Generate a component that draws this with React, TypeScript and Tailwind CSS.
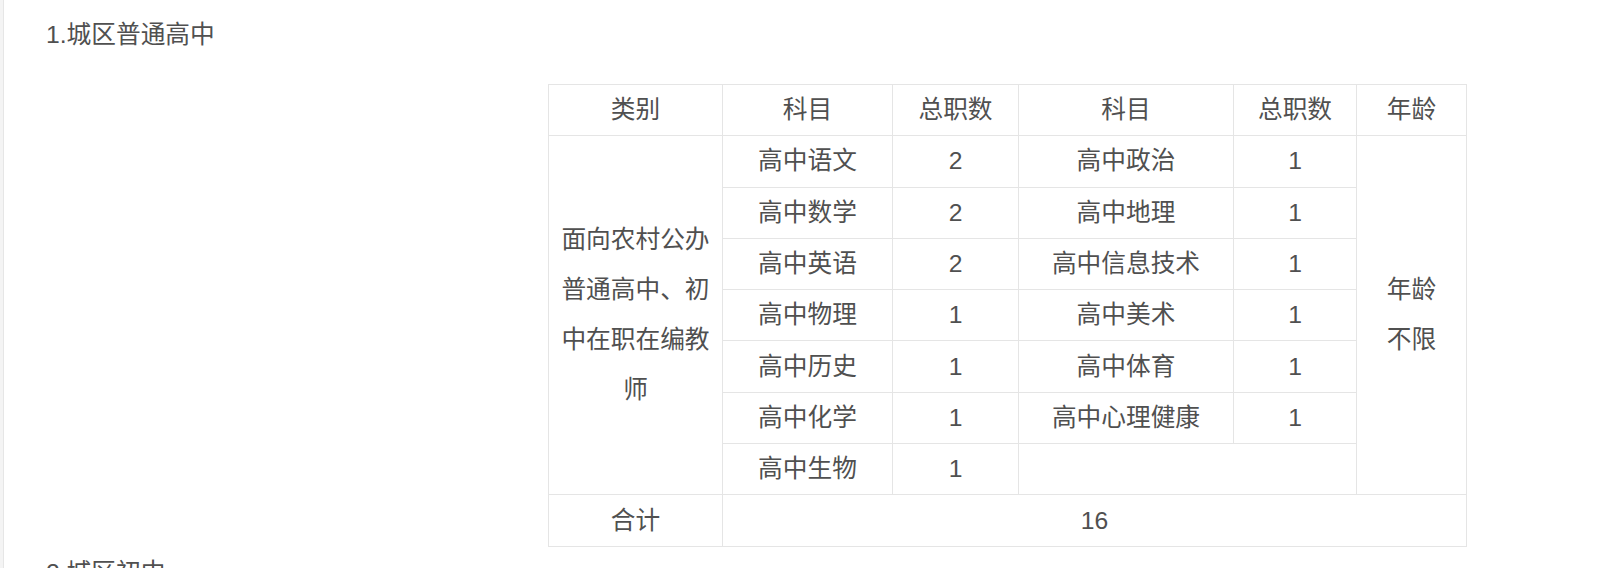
const left = [
  ['高中语文', '2', '高中政治', '1'],
  ['高中数学', '2', '高中地理', '1'],
  ['高中英语', '2', '高中信息技术', '1'],
  ['高中物理', '1', '高中美术', '1'],
  ['高中历史', '1', '高中体育', '1'],
  ['高中化学', '1', '高中心理健康', '1'],
]

const cell = 'border border-[#e5e5e5] p-0 text-center align-middle leading-[50px]'

export default function App() {
  return (
    <div
      className="flex min-h-screen bg-white text-[24.7px] text-[#505050]"
      style={{ fontFamily: '"Liberation Sans", "Noto Sans CJK SC", sans-serif' }}
    >
      <div className="w-[4px] shrink-0 border-r border-[#e6e6e6] bg-[#f4f4f4]" />
      <div className="flex-1 pl-[42px] pt-[11px]">
        <p className="leading-[48px]">1.城区普通高中</p>
        <table className="ml-[502px] mt-[25px] w-[918px] table-fixed border-collapse">
          <colgroup>
            <col className="w-[174px]" />
            <col className="w-[170px]" />
            <col className="w-[126px]" />
            <col className="w-[215px]" />
            <col className="w-[123px]" />
            <col className="w-[110px]" />
          </colgroup>
          <tbody>
            <tr className="h-[51.3px]">
              <td className={cell}>类别</td>
              <td className={cell}>科目</td>
              <td className={cell}>总职数</td>
              <td className={cell}>科目</td>
              <td className={cell}>总职数</td>
              <td className={cell}>年龄</td>
            </tr>
            {left.map((r, i) => (
              <tr key={r[0]} className="h-[51.3px]">
                {i === 0 && (
                  <td rowSpan={7} className={`${cell} px-[10px]`}>
                    面向农村公办普通高中、初中在职在编教师
                  </td>
                )}
                <td className={cell}>{r[0]}</td>
                <td className={cell}>{r[1]}</td>
                <td className={cell}>{r[2]}</td>
                <td className={cell}>{r[3]}</td>
                {i === 0 && (
                  <td rowSpan={7} className={cell}>
                    年龄
                    <br />
                    不限
                  </td>
                )}
              </tr>
            ))}
            <tr className="h-[51.3px]">
              <td className={cell}>高中生物</td>
              <td className={cell}>1</td>
              <td colSpan={2} className={cell}></td>
            </tr>
            <tr className="h-[51.3px]">
              <td className={cell}>合计</td>
              <td colSpan={5} className={cell}>
                16
              </td>
            </tr>
          </tbody>
        </table>
        <p className="mt-[2px] leading-[48px]">2.城区初中</p>
      </div>
    </div>
  )
}
